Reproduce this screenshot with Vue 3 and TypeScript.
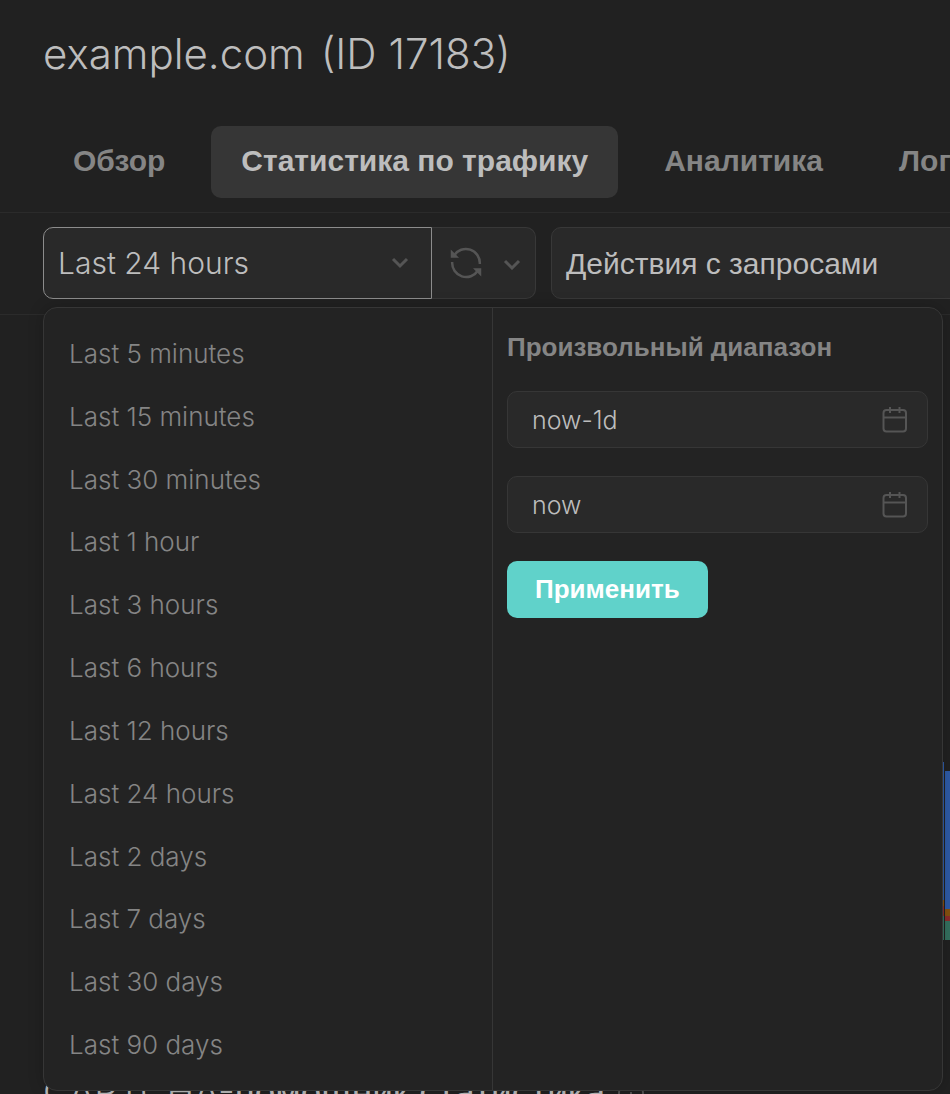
<script setup lang="ts">
import { ref } from 'vue'

const tabs = ['Обзор', 'Статистика по трафику', 'Аналитика', 'Логи']
const activeTab = ref('Статистика по трафику')
const ranges = [
  'Last 5 minutes', 'Last 15 minutes', 'Last 30 minutes', 'Last 1 hour',
  'Last 3 hours', 'Last 6 hours', 'Last 12 hours', 'Last 24 hours',
  'Last 2 days', 'Last 7 days', 'Last 30 days', 'Last 90 days',
]
const selected = ref('Last 24 hours')
const fields = ref([
  { id: 'range-from', label: 'От', value: 'now-1d' },
  { id: 'range-to', label: 'До', value: 'now' },
])
</script>

<template>
  <div class="page">
    <header>
      <h1><span>example.com</span><span>(ID 17183)</span></h1>
      <nav class="tabs">
        <a v-for="tab in tabs" :key="tab" href="#" :class="{ active: tab === activeTab }" @click.prevent="activeTab = tab">{{ tab }}</a>
      </nav>
    </header>

    <div class="toolbar">
      <div class="time-group">
        <button class="time" type="button" aria-expanded="true">
          <span>{{ selected }}</span>
          <svg class="chevron" viewBox="0 0 18 12"><path d="M2 2l7 7 7-7" /></svg>
        </button>
        <button class="refresh" type="button" aria-label="Refresh">
          <svg class="sync" viewBox="0 0 32 32">
            <path d="M4 8.500A14 14 0 0 1 29.800 17M28 23.500A14 14 0 0 1 2.200 15" />
            <path class="head" d="M2 5.500v4h4zM30 26.500v-4h-4z" />
          </svg>
          <svg class="chevron" viewBox="0 0 18 12"><path d="M2 4l7 7 7-7" /></svg>
        </button>
        <section class="popup">
          <ul class="ranges">
            <li v-for="range in ranges" :key="range">
              <button type="button" @click="selected = range">{{ range }}</button>
            </li>
          </ul>
          <form class="custom" @submit.prevent>
            <h2>Произвольный диапазон</h2>
            <div v-for="field in fields" :key="field.id" class="field">
              <input :id="field.id" v-model="field.value" type="text" :aria-label="field.label">
              <svg viewBox="0 0 28 28">
                <rect x="2.500" y="4" width="22.500" height="21.500" rx="3" />
                <path d="M3 11.500h22M9 1v6M18.500 1v6" />
              </svg>
            </div>
            <button class="apply" type="submit">Применить</button>
          </form>
        </section>
      </div>
      <button class="actions" type="button">Действия с запросами</button>
    </div>

    <main>
      <div class="chart">
        <div class="bar early"><i class="blue" /><i class="orange" /><i class="red" /><i class="green" /></div>
        <div class="bar"><i class="blue" /><i class="orange" /><i class="red" /><i class="green" /></div>
      </div>
      <h2 class="next">
        <span>CAPTCHA-<span class="cyr">помощник статистика</span></span>
        <svg class="info" viewBox="0 0 28 28"><circle cx="14" cy="14" r="12" /><path d="M14 13v7M14 8v2" /></svg>
      </h2>
    </main>
  </div>
</template>

<style>
body {
  margin: 0;
  background: #212121;
}
</style>

<style scoped>
.page {
  height: 100vh;
  overflow: hidden;
  background: #212121;
  color: #bdbdbd;
  font-family: Inter, "Liberation Sans", sans-serif;
}
.page * {
  box-sizing: border-box;
}
button,
input {
  font: inherit;
  color: inherit;
}
button {
  cursor: pointer;
}
svg {
  flex: none;
  fill: none;
  stroke: #555;
  stroke-width: 3;
}
header {
  height: 213px;
  padding: 24px 0 0 43px;
  border-bottom: 1px solid #2b2b2b;
}
h1 {
  display: flex;
  gap: 16px;
  margin: 0 0 42px;
  font-size: 42px;
  font-weight: 300;
  line-height: 60px;
  white-space: nowrap;
}
.tabs {
  display: flex;
  gap: 16px;
  font: 700 30px/70px "Liberation Sans", sans-serif;
}
.tabs a {
  flex: none;
  height: 72px;
  padding: 0 30px;
  border-radius: 10px;
  color: #858585;
  text-decoration: none;
}
.tabs a.active {
  background: #363636;
  color: #bdbdbd;
}
.toolbar {
  display: flex;
  gap: 15px;
  height: 102px;
  padding: 14px 0 0 43px;
  border-bottom: 1px solid #2b2b2b;
}
.time-group {
  position: relative;
  display: flex;
  flex: none;
  height: 72px;
}
.time,
.refresh,
.actions {
  display: flex;
  align-items: center;
  border: 1px solid #383838;
  background: #292929;
}
.time {
  justify-content: space-between;
  width: 389px;
  padding: 0 22px 0 14px;
  border-color: #8c8c8c;
  border-radius: 10px 0 0 10px;
  font-size: 30px;
  font-weight: 300;
}
.chevron {
  width: 18px;
  height: 12px;
}
.refresh {
  gap: 21px;
  width: 104px;
  padding: 0 0 0 18px;
  border-left: 0;
  border-radius: 0 10px 10px 0;
}
.refresh .chevron {
  height: 14px;
}
.sync {
  width: 32px;
  height: 32px;
  stroke-width: 2.500;
}
.head {
  fill: #555;
}
.actions {
  flex: 1 0 480px;
  height: 72px;
  padding: 2px 14px 0;
  border-radius: 10px;
  font: 400 30px/40px "Liberation Sans", sans-serif;
}
.popup {
  position: absolute;
  z-index: 2;
  top: 80px;
  left: 0;
  display: grid;
  grid-template-columns: 449px 449px;
  width: 900px;
  height: 784px;
  border: 1px solid #363636;
  border-radius: 14px;
  background: #232323;
  box-shadow: 0 0 16px #0003;
}
.ranges {
  display: grid;
  grid-template-rows: repeat(12, 1fr);
  margin: 0;
  padding: 14px 0 14px;
  border-right: 1px solid #363636;
  list-style: none;
}
.ranges button {
  width: 100%;
  height: 100%;
  padding: 0 25px;
  border: 0;
  background: none;
  color: #858585;
  font-size: 26px;
  font-weight: 300;
  text-align: left;
}
.custom {
  padding: 24px 14px 0;
}
.custom h2 {
  margin: 0 0 28px;
  color: #858585;
  font: 700 26px/31px "Liberation Sans", sans-serif;
}
.field {
  display: flex;
  align-items: center;
  height: 57px;
  margin-bottom: 28px;
  padding: 0 18px 0 24px;
  border: 1px solid #363636;
  border-radius: 10px;
  background: #292929;
}
.field input {
  flex: 1;
  min-width: 0;
  padding: 0;
  border: 0;
  outline: 0;
  background: none;
  font-size: 25px;
  font-weight: 300;
}
.field svg {
  width: 28px;
  height: 28px;
  stroke-width: 2;
}
.apply {
  height: 57px;
  padding: 0 28px;
  border: 0;
  border-radius: 10px;
  background: #60d2ca;
  color: #fff;
  font: 700 26px/57px "Liberation Sans", sans-serif;
}
main {
  padding: 447px 0 0 43px;
}
.chart {
  display: flex;
  align-items: flex-end;
  justify-content: flex-end;
  gap: 1px;
  height: 178px;
}
.bar {
  display: grid;
  grid-template-rows: 138px 7px 5px 19px;
  width: 5px;
}
.bar.early {
  grid-template-rows: 138px 6px 10px 24px;
  width: 1px;
}
.bar i {
  display: block;
}
.blue {
  background: #2e5aa6;
}
.orange {
  background: #85510f;
}
.red {
  background: #8c2c2c;
}
.green {
  background: #34705f;
}
.next {
  display: flex;
  align-items: center;
  gap: 12px;
  margin: 130px 0 0;
  font-size: 37px;
  font-weight: 300;
  line-height: 44px;
  white-space: nowrap;
}
.cyr {
  font-family: "Liberation Sans", sans-serif;
}
.info {
  width: 28px;
  height: 28px;
  stroke-width: 2;
}
</style>
